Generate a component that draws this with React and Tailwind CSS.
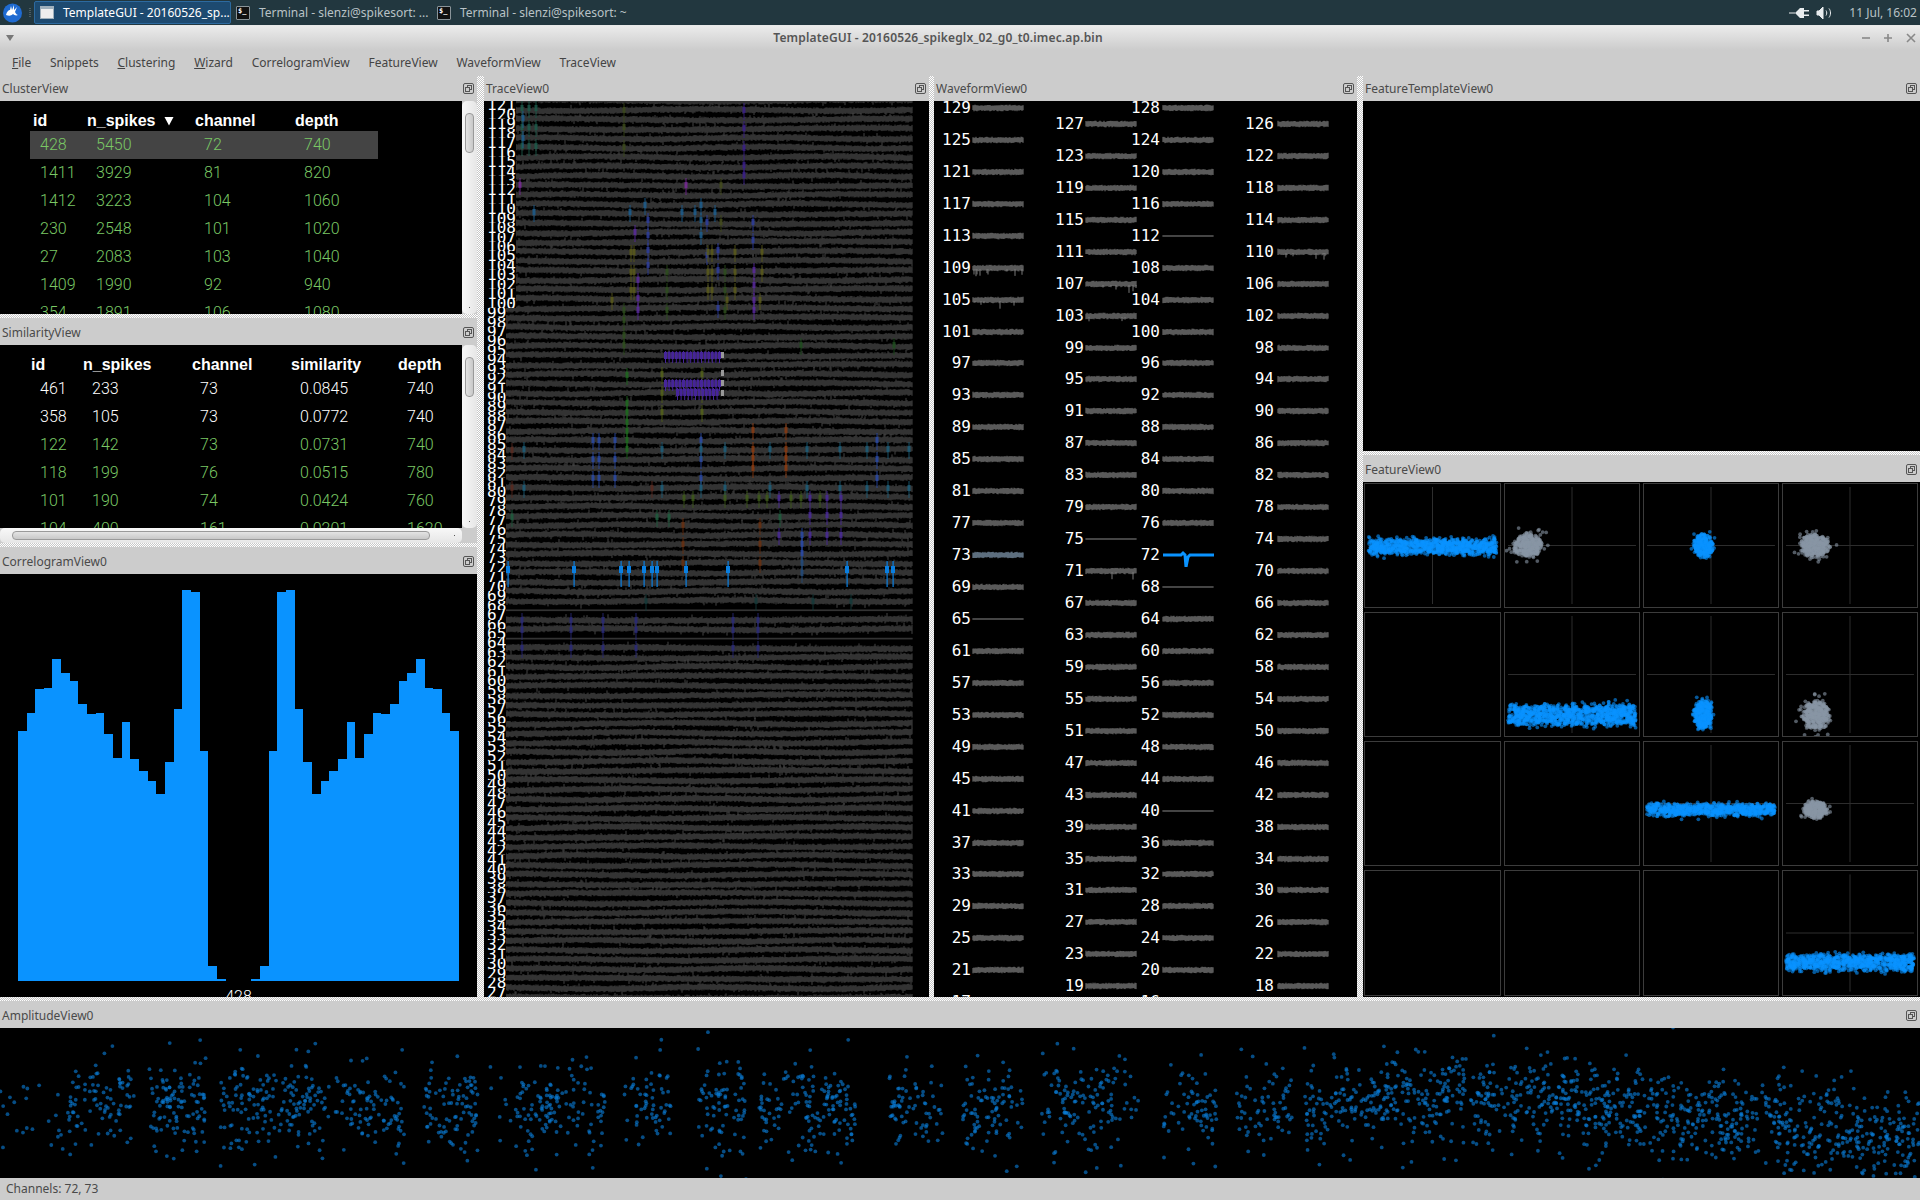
import { useMemo } from "react";

function makeRng(seed) {
  let a = seed;
  return () => {
    a |= 0;
    a = (a + 0x6d2b79f5) | 0;
    let t = Math.imul(a ^ (a >>> 15), 1 | a);
    t = (t + Math.imul(t ^ (t >>> 7), 61 | t)) ^ t;
    return ((t ^ (t >>> 14)) >>> 0) / 4294967296;
  };
}

function gauss(r) {
  return Math.sqrt(-2 * Math.log(r() + 1e-6)) * Math.cos(2 * Math.PI * r());
}

const clusterRows = [
  ["428", "5450", "72", "740"],
  ["1411", "3929", "81", "820"],
  ["1412", "3223", "104", "1060"],
  ["230", "2548", "101", "1020"],
  ["27", "2083", "103", "1040"],
  ["1409", "1990", "92", "940"],
  ["354", "1891", "106", "1080"],
];

const similarityRows = [
  ["461", "233", "73", "0.0845", "740"],
  ["358", "105", "73", "0.0772", "740"],
  ["122", "142", "73", "0.0731", "740"],
  ["118", "199", "76", "0.0515", "780"],
  ["101", "190", "74", "0.0424", "760"],
  ["104", "400", "161", "0.0201", "1620"],
];

// edges and tops read off the histogram, in px from the view's left / page top
const correlogramBars = [
  [54, 81, 483], [81, 105, 429], [105, 132, 357], [132, 156, 354], [156, 183, 267],
  [183, 210, 309], [210, 234, 333], [234, 261, 402], [261, 288, 432], [288, 312, 429],
  [312, 339, 492], [339, 366, 564], [366, 390, 456], [390, 417, 567], [417, 444, 603],
  [444, 468, 633], [468, 495, 672], [495, 522, 576], [522, 546, 417], [546, 573, 60],
  [573, 600, 66], [600, 624, 543], [624, 651, 1188], [651, 678, 1226],
  [753, 780, 1226], [780, 807, 1188], [807, 831, 543], [831, 858, 66], [858, 885, 60],
  [885, 909, 417], [909, 936, 576], [936, 963, 672], [963, 987, 633], [987, 1014, 603],
  [1014, 1041, 567], [1041, 1065, 456], [1065, 1092, 564], [1092, 1119, 492], [1119, 1143, 429],
  [1143, 1170, 432], [1170, 1197, 402], [1197, 1221, 333], [1221, 1248, 309], [1248, 1275, 267],
  [1275, 1299, 354], [1299, 1326, 357], [1326, 1350, 429], [1350, 1377, 483],
];

const spikeGroups = [
  ["#1d5a4a", [522, 529, 536], [108, 127, 146]],
  ["#1d5f8f", [523], [118, 138]],
  ["#3d4a1d", [624], [110, 127, 147]],
  ["#3a1f8a", [744], [110, 128, 148, 165, 175]],
  ["#7a2a9a", [520, 686], [185]],
  ["#454d1d", [721], [185, 222]],
  ["#1d5f8f", [534, 630, 682, 695, 715], [212]],
  ["#1d5f8f", [645], [205]],
  ["#1d5f8f", [701], [205, 220, 235]],
  ["#2f3f9f", [648], [220, 235, 250, 265]],
  ["#2f3f9f", [707], [222, 255]],
  ["#2f3f9f", [718], [250, 270, 308]],
  ["#2f3f9f", [753], [222, 240]],
  ["#5a2a9f", [635], [232]],
  ["#5a2a9f", [638], [280, 298, 310]],
  ["#5a2a9f", [754], [270, 285, 300, 310]],
  ["#5a5a1a", [631, 634, 708, 712, 735], [252, 272, 290]],
  ["#5a5a1a", [762], [252, 272]],
  ["#5a5a1a", [612, 727, 760], [300]],
  ["#2f4f1f", [667, 725], [272, 290, 310]],
  ["#2f4f1f", [624], [310, 320, 335, 345]],
  ["#1f4f1f", [801, 894], [345]],
  ["#55621a", [662, 702], [374, 393, 412]],
  ["#1f6a1f", [627], [375, 403, 412, 422, 431, 440, 449]],
  ["#2a4aa8", [593, 599, 615, 701, 877], [440, 459, 478]],
  ["#8a3a10", [753, 786], [430, 449, 458, 468]],
  ["#5a2a20", [512], [450, 488]],
  ["#5a2a20", [652], [488]],
  ["#1d5f7a", [524, 662, 701, 725, 770, 807, 840, 867, 888, 909], [449, 488]],
  ["#3f5a1a", [684, 693, 725, 747, 759, 767, 791, 801, 820], [498]],
  ["#4a2a9a", [779], [498, 535]],
  ["#4a2a9a", [810, 827, 841], [498, 515, 535]],
  ["#1f5f3f", [512, 657, 669, 780], [517]],
  ["#6a3010", [683, 760], [525, 544, 563]],
  ["#2a4aa8", [802], [535, 544, 553]],
  ["#234a7a", [802], [563, 573]],
  ["#153a3a", [646, 756, 813, 851], [601]],
  ["#2a2a7a", [522, 571, 603, 636, 733, 758], [620, 630, 648]],
];

const brightSpikes = [508, 574, 621, 629, 644, 652, 657, 686, 728, 847, 887, 893];

const amplitudeBursts = [
  [0, 45, 16], [45, 110, 95], [122, 168, 110], [180, 265, 170], [265, 285, 16], [285, 330, 80], [345, 390, 90],
  [395, 420, 8], [420, 495, 130], [510, 550, 60], [570, 610, 80], [620, 700, 150], [725, 770, 70],
  [785, 835, 90], [850, 930, 130], [950, 995, 70], [1010, 1055, 70], [1065, 1190, 260],
  [1190, 1290, 220], [1290, 1450, 360], [1450, 1568, 290],
];

function rowY(ch) {
  return 110 + (121 - ch) * 9.44;
}

function FloatIcon() {
  return (
    <svg width="11" height="11" viewBox="0 0 11 11" fill="none" stroke="#555" className="shrink-0">
      <rect x="0.5" y="0.5" width="10" height="10" rx="1.5" />
      <rect x="4.5" y="2.5" width="4" height="4" />
      <rect x="2.5" y="4.5" width="4" height="4" fill="#ccc" />
    </svg>
  );
}

function DockTitle({ label, icon = true, className = "h-[25px]" }) {
  return (
    <div className={`flex items-center justify-between bg-[#cccccc] pl-[2px] pr-[3px] text-[12px] text-[#4a4a4a] shrink-0 ${className}`}>
      <span>{label}</span>
      {icon && <FloatIcon />}
    </div>
  );
}

function HSplit() {
  return <div className="h-[4px] shrink-0 bg-[repeating-conic-gradient(#ffffff_0_25%,#c8c8c8_0_50%)] bg-[length:2px_2px]" />;
}

function VSplit({ className }) {
  return <div className={`shrink-0 bg-[repeating-conic-gradient(#ffffff_0_25%,#c8c8c8_0_50%)] bg-[length:2px_2px] ${className}`} />;
}

function VScroll() {
  return (
    <div className="flex w-[15px] shrink-0 flex-col items-center rounded-[5px] bg-gradient-to-r from-[#f8f8f8] to-[#e6e6e6] pt-[12px] pb-[6px]">
      <div className="h-[40px] w-[9px] rounded-[4px] border border-[#9a9a9a] bg-gradient-to-r from-[#e4e4e4] to-[#c8c8c8]" />
      <div className="mt-auto h-[1px] w-[1px] bg-[#555]" />
    </div>
  );
}

function HScroll() {
  return (
    <div className="flex h-[15px] w-[462px] items-center rounded-[5px] bg-gradient-to-b from-[#f8f8f8] to-[#e6e6e6] pl-[12px] pr-[7px]">
      <div className="h-[9px] w-[418px] rounded-[4px] border border-[#9a9a9a] bg-gradient-to-b from-[#e4e4e4] to-[#c8c8c8]" />
      <div className="ml-auto h-[1px] w-[1px] bg-[#555]" />
    </div>
  );
}

function ClusterTable() {
  return (
    <div className="h-[213px] flex-1 overflow-hidden bg-black pl-[30px] font-['Liberation_Sans',sans-serif] text-[16px]">
      <div className="flex h-[30px] items-center pt-[10px] font-bold text-white">
        <div className="w-[57px] pl-[3px]">id</div>
        <div className="flex w-[108px] items-center">
          n_spikes
          <svg width="10" height="10" viewBox="0 0 10 10" className="ml-[9px]">
            <path d="M0.5 1h9L5 9.5z" fill="#fff" />
          </svg>
        </div>
        <div className="w-[100px]">channel</div>
        <div className="w-[83px]">depth</div>
      </div>
      {clusterRows.map((r, i) => (
        <div
          key={r[0]}
          className={`flex h-[28px] w-[348px] items-center font-['Roboto',sans-serif] font-light text-[#7ac865] ${i === 0 ? "bg-[#444444]" : ""}`}
        >
          <div className="w-[57px] pl-[10px]">{r[0]}</div>
          <div className="w-[108px] pl-[9px]">{r[1]}</div>
          <div className="w-[100px] pl-[9px]">{r[2]}</div>
          <div className="w-[83px] pl-[9px]">{r[3]}</div>
        </div>
      ))}
    </div>
  );
}

function SimilarityTable() {
  return (
    <div className="h-[183px] flex-1 overflow-hidden bg-black pl-[31px] font-['Liberation_Sans',sans-serif] text-[16px]">
      <div className="flex h-[30px] items-center pt-[10px] font-bold text-white">
        <div className="w-[52px]">id</div>
        <div className="w-[109px]">n_spikes</div>
        <div className="w-[99px]">channel</div>
        <div className="w-[107px]">similarity</div>
        <div>depth</div>
      </div>
      {similarityRows.map((r, i) => (
        <div
          key={r[0]}
          className={`flex h-[28px] items-center font-['Roboto',sans-serif] font-light ${i < 2 ? "text-white" : "text-[#7ac865]"}`}
        >
          <div className="w-[52px] pl-[9px]">{r[0]}</div>
          <div className="w-[109px] pl-[9px]">{r[1]}</div>
          <div className="w-[99px] pl-[8px]">{r[2]}</div>
          <div className="w-[107px] pl-[9px]">{r[3]}</div>
          <div className="pl-[9px]">{r[4]}</div>
        </div>
      ))}
    </div>
  );
}

function Correlogram() {
  return (
    <div className="flex h-[423px] flex-col overflow-hidden bg-black">
      <svg width="477" height="408" viewBox="0 574 477 408" shapeRendering="crispEdges" className="shrink-0">
        {correlogramBars.map(([a, b, top]) => (
          <rect
            key={a}
            x={a / 3}
            y={570 + top / 3}
            width={(b - a) / 3}
            height={980.7 - 570 - top / 3}
            fill="#0a93ff"
          />
        ))}
      </svg>
      <div className="pt-[7px] text-center font-['Roboto',sans-serif] text-[16px] font-light leading-[16px] text-white">428</div>
    </div>
  );
}

function TraceView() {
  const channels = useMemo(() => {
    const list = [];
    for (let ch = 122; ch >= 27; ch--) list.push(ch);
    return list;
  }, []);

  const noise = useMemo(() => {
    const r = makeRng(11);
    let d = "";
    for (const ch of channels) {
      const base = rowY(ch) - 101;
      const thin = ch === 68 || ch === 65;
      const ph = r() * 6.28;
      const f = 0.01 + r() * 0.02;
      for (let x = 22; x < 429; x++) {
        const drift = thin ? 0 : Math.sin(x * f + ph) * 0.9;
        let up = thin ? 0.8 : 2 + r() * 1.6;
        let down = thin ? 0.8 : 2 + r() * 1.6;
        if (!thin && r() < 0.04) down += r() * 3.5;
        if (!thin && r() < 0.04) up += r() * 3.5;
        d += `M${x} ${(base + drift - up).toFixed(1)}V${(base + drift + down).toFixed(1)}`;
      }
    }
    return d;
  }, [channels]);

  const band = [];
  const bandRows = [[355, 665], [383, 665], [392, 677]];
  bandRows.forEach(([y, x0]) => {
    for (let x = x0; x < 720; x += 3.6) band.push([x, y]);
  });

  return (
    <div className="relative h-[896px] overflow-hidden bg-black">
      <svg width="445" height="896" viewBox="0 0 445 896" className="absolute inset-0">
        <path d={noise} stroke="#444444" strokeWidth="1" fill="none" />
        {spikeGroups.map(([color, xs, ys], i) =>
          xs.map((x) =>
            ys.map((y) => (
              <g key={`${i}-${x}-${y}`} fill={color} opacity="0.85">
                <rect x={x - 485.5} y={y - 104} width="3" height="6" />
                <rect x={x - 484.5} y={y - 108} width="1" height="17" />
              </g>
            )),
          ),
        )}
        {band.map(([x, y]) => (
          <g key={`${x}-${y}`} fill="#46259a">
            <rect x={x - 485} y={y - 104} width="3" height="7" />
            <rect x={x - 484} y={y - 105} width="1" height="12" />
          </g>
        ))}
        {[355, 373, 383, 393].map((y) => (
          <rect key={y} x="237" y={y - 104} width="3" height="6" fill="#999999" />
        ))}
        {brightSpikes.map((x) => (
          <g key={x} fill="#0a7fe0">
            <rect x={x - 486} y={465} width="4" height="7" />
            <rect x={x - 484.5} y={460} width="1.2" height="26" />
          </g>
        ))}
      </svg>
      <div className="relative -mt-[10px] flex flex-col items-start">
        {channels.map((ch) => (
          <div
            key={ch}
            className="h-[9.44px] shrink-0 overflow-hidden bg-black pl-[3px] font-['DejaVu_Sans_Mono',monospace] text-[16px] leading-[10px] text-white"
          >
            {ch}
          </div>
        ))}
      </div>
    </div>
  );
}

function wavePath(r, ch) {
  const thin = [112, 75, 68, 65, 40].includes(ch);
  const spiky = { 105: 10, 107: 8, 109: 7, 103: 6, 110: 6, 71: 7 }[ch] || 0;
  let d = "";
  for (let x = 0; x < 51; x++) {
    const up = thin ? 0.7 : 2 + r() * 1.3;
    const down = thin ? 0.7 : 2 + r() * 1.3;
    d += `M${x} ${(12 - up).toFixed(1)}V${(12 + down).toFixed(1)}`;
    if (spiky && r() < 0.12) d += `M${x} 13V${(14 + r() * spiky).toFixed(1)}`;
  }
  return d;
}

function Wave({ ch, r }) {
  if (ch === 72) {
    return (
      <svg width="51" height="24" className="shrink-0">
        <path d="M0 12h18l2-2 2 2 1 12 2-10 2-2h24" stroke="#0a93ff" strokeWidth="3" fill="none" />
      </svg>
    );
  }
  return (
    <svg width="51" height="24" className="shrink-0 overflow-visible">
      <path d={wavePath(r, ch)} stroke={ch === 73 ? "#7d93a8" : "#787878"} strokeWidth="1" fill="none" />
    </svg>
  );
}

function WaveColumn({ first, labelBox, gap, offset, seed }) {
  const r = makeRng(seed);
  const chs = [];
  for (let c = first; c >= 14; c -= 4) chs.push(c);
  return (
    <div className={`flex flex-col ${offset}`}>
      {chs.map((ch) => (
        <div key={ch} className={`flex h-[31.95px] shrink-0 items-center ${gap}`}>
          <div className={`flex justify-end whitespace-nowrap ${labelBox}`}>{ch}</div>
          <Wave ch={ch} r={r} />
        </div>
      ))}
    </div>
  );
}

function WaveformView() {
  return (
    <div className="flex h-[896px] overflow-hidden bg-black font-['DejaVu_Sans_Mono',monospace] text-[16px] text-white">
      <WaveColumn first={129} labelBox="w-[37px]" gap="gap-[2px]" offset="-mt-[9px]" seed={1} />
      <WaveColumn first={127} labelBox="w-[60px]" gap="gap-[2px]" offset="mt-[7px]" seed={2} />
      <WaveColumn first={128} labelBox="w-[23px]" gap="gap-[3px]" offset="-mt-[9px]" seed={3} />
      <WaveColumn first={126} labelBox="w-[60px]" gap="gap-[4px]" offset="mt-[7px]" seed={4} />
    </div>
  );
}

// points fill an ellipse (or the whole cell width for a band) with a soft edge, plus a few strays
function Scatter({ seed, kind, x, y, sx, sy, color, count, outliers = 0, spread = 1.8 }) {
  const pts = useMemo(() => {
    const r = makeRng(seed);
    const out = [];
    const disc = () => {
      const a = r() * 6.283;
      const d = Math.sqrt(r());
      return [Math.cos(a) * d, Math.sin(a) * d];
    };
    for (let i = 0; i < count; i++) {
      if (kind === "band") out.push([3 + r() * 129, y * 124 + (r() * 2 - 1) * sy + gauss(r) * 2]);
      else {
        const [dx, dy] = disc();
        out.push([x * 135 + dx * sx + gauss(r) * 1.3, y * 124 + dy * sy + gauss(r) * 1.3]);
      }
    }
    for (let i = 0; i < outliers; i++) {
      if (kind === "band") out.push([3 + r() * 129, y * 124 + (r() * 2 - 1) * sy * spread]);
      else {
        const [dx, dy] = disc();
        out.push([x * 135 + dx * sx * spread, y * 124 + dy * sy * spread]);
      }
    }
    return out;
  }, [seed, kind, x, y, sx, sy, count, outliers, spread]);
  return pts.map(([px, py], i) => <circle key={i} cx={px} cy={py} r="1.9" fill={color} opacity="0.6" />);
}

const BLUE = "#0a93ff";
const GREY = "#8896a5";

const featureCells = [
  { cross: true, seed: 21, kind: "band", y: 0.51, sy: 6.5, color: BLUE, count: 900, outliers: 12, spread: 1.8 },
  { cross: true, seed: 22, kind: "blob", x: 0.175, y: 0.5, sx: 14, sy: 11, color: GREY, count: 320, outliers: 22, spread: 1.8 },
  { cross: true, seed: 23, kind: "blob", x: 0.44, y: 0.5, sx: 9, sy: 11, color: BLUE, count: 300, outliers: 4, spread: 1.5 },
  { cross: true, seed: 24, kind: "blob", x: 0.24, y: 0.5, sx: 14, sy: 11, color: GREY, count: 320, outliers: 18, spread: 1.7 },
  { cross: false },
  { cross: true, seed: 25, kind: "band", y: 0.83, sy: 9, color: BLUE, count: 1000, outliers: 30, spread: 1.9 },
  { cross: true, seed: 26, kind: "blob", x: 0.44, y: 0.83, sx: 9, sy: 14, color: BLUE, count: 320, outliers: 10, spread: 1.5 },
  { cross: true, seed: 27, kind: "blob", x: 0.25, y: 0.83, sx: 13, sy: 14, color: GREY, count: 340, outliers: 20, spread: 1.7 },
  { cross: false },
  { cross: false },
  { cross: true, seed: 28, kind: "band", y: 0.55, sy: 4.5, color: BLUE, count: 760, outliers: 8, spread: 1.8 },
  { cross: true, seed: 29, kind: "blob", x: 0.24, y: 0.55, sx: 11, sy: 8, color: GREY, count: 280, outliers: 12, spread: 1.7 },
  { cross: false },
  { cross: false },
  { cross: false },
  { cross: true, seed: 30, kind: "band", y: 0.74, sy: 6.5, color: BLUE, count: 860, outliers: 12, spread: 1.8 },
];

function FeatureView() {
  return (
    <div className="grid h-[515px] grid-cols-[137px_136px_136px_136px] grid-rows-[125px_125px_125px_126px] gap-x-[3px] gap-y-[4px] bg-black pl-[1px] pt-[1px]">
      {featureCells.map((c, i) => (
        <div key={i} className="overflow-hidden border border-[#3c3c3c]">
          <svg viewBox="0 0 135 124" className="block h-full w-full">
            {c.cross && (
              <g stroke="#2e2e2e" strokeWidth="1">
                <path d="M3 62H132" />
                <path d="M67.5 3V121" />
              </g>
            )}
            {c.seed && <Scatter {...c} />}
          </svg>
        </div>
      ))}
    </div>
  );
}

function AmplitudeView() {
  const dots = useMemo(() => {
    const r = makeRng(77);
    const out = [];
    amplitudeBursts.forEach(([a, b, n]) => {
      for (let i = 0; i < n; i++) {
        const x = (a + r() * (b - a)) * 1.2245;
        let mid = 78;
        if (x > 1300) mid = 78 - Math.min(1, (x - 1300) / 150) * 8;
        if (x > 1500) mid = 70 + ((x - 1500) / 420) * 42;
        out.push([x, mid + gauss(r) * 23]);
      }
    });
    return out;
  }, []);
  return (
    <div className="h-[150px] overflow-hidden bg-black">
      <svg width="1920" height="150" viewBox="0 0 1920 150" className="block">
        {dots.map(([x, y], i) => (
          <circle key={i} cx={x} cy={y} r="1.9" fill="#0a7cd6" opacity="0.62" />
        ))}
      </svg>
    </div>
  );
}

function TerminalIcon() {
  return (
    <div className="flex h-[14px] w-[14px] shrink-0 items-start rounded-[1px] border border-[#8a9499] bg-[#111] pl-[1px] font-['DejaVu_Sans_Mono',monospace] text-[7px] font-bold leading-[9px] text-white">
      $_
    </div>
  );
}

function TaskBar() {
  return (
    <div className="flex h-[25px] shrink-0 items-center bg-[#22373f] text-[12px] text-[#b9c2c6]">
      <svg width="24" height="24" viewBox="0 0 24 24" className="ml-[1px] shrink-0">
        <circle cx="11.5" cy="12" r="9.5" fill="#1f6bd2" />
        <path d="M5 14c1-4 3-5 4-5l1-4 1 4 2-5 0 5 3-3-2 5c1 2 2 3 3 3-2 1-4 0-5-1-2 2-4 2-7 1z" fill="#fff" />
      </svg>
      <div className="ml-[4px] h-[9px] w-[2px] border-x border-dotted border-[#4c5c62]" />
      <div className="ml-[3px] flex h-[23px] w-[197px] items-center gap-[9px] rounded-[2px] border border-[#2c6aa0] bg-[#1d4a70] pl-[5px] text-white">
        <div className="h-[13px] w-[14px] shrink-0 border border-[#9fb0bc] border-t-[3px] bg-[#eeeeee]" />
        <span className="whitespace-nowrap">TemplateGUI - 20160526_sp...</span>
      </div>
      <div className="ml-[5px] flex w-[201px] items-center gap-[9px]">
        <TerminalIcon />
        <span className="whitespace-nowrap">Terminal - slenzi@spikesort: ...</span>
      </div>
      <div className="flex items-center gap-[9px]">
        <TerminalIcon />
        <span className="whitespace-nowrap">Terminal - slenzi@spikesort: ~</span>
      </div>
      <div className="ml-auto flex items-center pr-[3px]">
        <svg width="21" height="12" viewBox="0 0 21 12" fill="#e8ecee">
          <path d="M0 5.5h6v1H0zM6 6l5-5h4v10h-4zM15 3h5v1.500h-5zM15 7.500h5V9h-5z" />
        </svg>
        <svg width="18" height="14" viewBox="0 0 18 14" fill="none" stroke="#e8ecee" className="ml-[6px]">
          <path d="M1 5h2l4-4v12l-4-4H1z" fill="#e8ecee" />
          <path d="M10 4.500c1 1.500 1 3.500 0 5M13 2.500c2 2.500 2 6.500 0 9" />
        </svg>
        <span className="ml-[15px] whitespace-nowrap">11 Jul, 16:02</span>
      </div>
    </div>
  );
}

function TitleBar() {
  return (
    <div className="flex h-[24px] shrink-0 items-center bg-gradient-to-b from-[#ebebeb] to-[#cccccc] text-[12px] font-semibold text-[#555555]">
      <svg width="8" height="6" viewBox="0 0 8 6" className="ml-[6px] shrink-0">
        <path d="M0 0h8L4 6z" fill="#777" />
      </svg>
      <div className="flex-1 text-center tracking-[0.16px]">TemplateGUI - 20160526_spikeglx_02_g0_t0.imec.ap.bin</div>
      <svg width="58" height="12" viewBox="0 0 58 12" fill="none" stroke="#888" strokeWidth="1.6" className="shrink-0">
        <path d="M0 6h8" />
        <path d="M22 6h8M26 2v8" />
        <path d="M45 2l8 8M53 2l-8 8" />
      </svg>
    </div>
  );
}

function MenuBar() {
  const items = [
    ["F", "ile"],
    ["", "Snippets"],
    ["C", "lustering"],
    ["W", "izard"],
    ["", "CorrelogramView"],
    ["", "FeatureView"],
    ["", "WaveformView"],
    ["", "TraceView"],
  ];
  return (
    <div className="flex h-[26px] shrink-0 items-center gap-[18.8px] bg-[#cccccc] pl-[12px] text-[12px] text-[#444444]">
      {items.map(([u, rest]) => (
        <span key={rest}>
          {u && <span className="underline">{u}</span>}
          {rest}
        </span>
      ))}
    </div>
  );
}

export default function App() {
  return (
    <div className="flex h-[1200px] w-[1920px] flex-col overflow-hidden bg-[#cccccc] font-['Noto_Sans',sans-serif]">
      <TaskBar />
      <div className="h-[1px] shrink-0 bg-[#e8e8e8]" />
      <TitleBar />
      <MenuBar />

      <div className="flex h-[921px] shrink-0">
        <div className="flex w-[477px] shrink-0 flex-col">
          <DockTitle label="ClusterView" />
          <div className="flex h-[213px] shrink-0">
            <ClusterTable />
            <VScroll />
          </div>
          <HSplit />
          <DockTitle label="SimilarityView" className="h-[27px] pt-[2px]" />
          <div className="flex h-[183px] shrink-0">
            <SimilarityTable />
            <VScroll />
          </div>
          <HScroll />
          <HSplit />
          <DockTitle label="CorrelogramView0" className="h-[27px] pt-[2px]" />
          <Correlogram />
        </div>
        <VSplit className="w-[7px]" />

        <div className="flex w-[445px] shrink-0 flex-col">
          <DockTitle label="TraceView0" />
          <TraceView />
        </div>
        <VSplit className="w-[5px]" />

        <div className="flex w-[423px] shrink-0 flex-col">
          <DockTitle label="WaveformView0" />
          <WaveformView />
        </div>
        <VSplit className="w-[6px]" />

        <div className="flex flex-1 flex-col">
          <DockTitle label="FeatureTemplateView0" />
          <div className="h-[350px] shrink-0 bg-black" />
          <HSplit />
          <DockTitle label="FeatureView0" className="h-[27px] pt-[2px]" />
          <FeatureView />
        </div>
      </div>

      <HSplit />
      <DockTitle label="AmplitudeView0" icon className="h-[27px] pt-[2px]" />
      <AmplitudeView />
      <div className="flex flex-1 items-center bg-[#cccccc] pl-[6px] text-[12px] text-[#4a4a4a]">Channels: 72, 73</div>
    </div>
  );
}
